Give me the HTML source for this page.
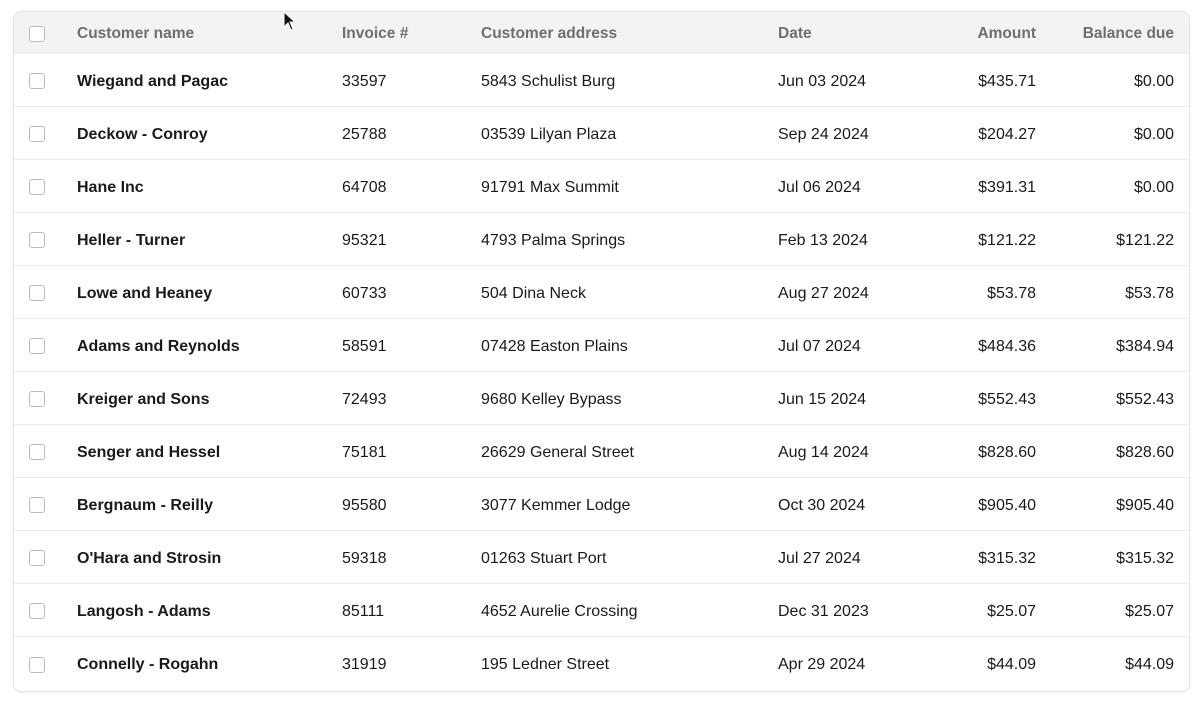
<!DOCTYPE html><html><head><style>
body{margin:0;background:#fff;font-family:"Liberation Sans",sans-serif;}
.t{position:absolute;left:13px;top:11px;width:1175px;height:679px;border:1px solid #e4e4e4;border-radius:8px;overflow:hidden;box-shadow:0 1px 2px rgba(0,0,0,.06)}
.r{position:absolute;left:0;width:1175px;height:53px;border-bottom:1px solid #ebebeb;box-sizing:border-box;font-size:16px;color:#1a1a1a}
.r:last-child{border-bottom:none}
.h{background:#f3f3f3;height:42px;color:#6e6e6e;font-weight:bold;font-size:15.5px}
.r span{position:absolute;top:calc(50% + 1.5px);transform:translateY(-50%);white-space:nowrap}
.r span.cb{top:calc(50% + 1px)}
.cb{left:15px;width:14px;height:14px;border:1px solid #b8bcc2;border-radius:3px;background:#fff}
.n{left:63px;font-weight:bold}
.i{left:328px}.a{left:467px}.d{left:764px}
.m{right:153px}.b{right:15px}
</style></head><body><div class="t">
<div class="r h" style="top:0"><span class="cb"></span><span class="n">Customer name</span><span class="i">Invoice #</span><span class="a">Customer address</span><span class="d">Date</span><span class="m">Amount</span><span class="b">Balance due</span></div>
<div class="r" style="top:42px"><span class="cb"></span><span class="n">Wiegand and Pagac</span><span class="i">33597</span><span class="a">5843 Schulist Burg</span><span class="d">Jun 03 2024</span><span class="m">$435.71</span><span class="b">$0.00</span></div>
<div class="r" style="top:95px"><span class="cb"></span><span class="n">Deckow - Conroy</span><span class="i">25788</span><span class="a">03539 Lilyan Plaza</span><span class="d">Sep 24 2024</span><span class="m">$204.27</span><span class="b">$0.00</span></div>
<div class="r" style="top:148px"><span class="cb"></span><span class="n">Hane Inc</span><span class="i">64708</span><span class="a">91791 Max Summit</span><span class="d">Jul 06 2024</span><span class="m">$391.31</span><span class="b">$0.00</span></div>
<div class="r" style="top:201px"><span class="cb"></span><span class="n">Heller - Turner</span><span class="i">95321</span><span class="a">4793 Palma Springs</span><span class="d">Feb 13 2024</span><span class="m">$121.22</span><span class="b">$121.22</span></div>
<div class="r" style="top:254px"><span class="cb"></span><span class="n">Lowe and Heaney</span><span class="i">60733</span><span class="a">504 Dina Neck</span><span class="d">Aug 27 2024</span><span class="m">$53.78</span><span class="b">$53.78</span></div>
<div class="r" style="top:307px"><span class="cb"></span><span class="n">Adams and Reynolds</span><span class="i">58591</span><span class="a">07428 Easton Plains</span><span class="d">Jul 07 2024</span><span class="m">$484.36</span><span class="b">$384.94</span></div>
<div class="r" style="top:360px"><span class="cb"></span><span class="n">Kreiger and Sons</span><span class="i">72493</span><span class="a">9680 Kelley Bypass</span><span class="d">Jun 15 2024</span><span class="m">$552.43</span><span class="b">$552.43</span></div>
<div class="r" style="top:413px"><span class="cb"></span><span class="n">Senger and Hessel</span><span class="i">75181</span><span class="a">26629 General Street</span><span class="d">Aug 14 2024</span><span class="m">$828.60</span><span class="b">$828.60</span></div>
<div class="r" style="top:466px"><span class="cb"></span><span class="n">Bergnaum - Reilly</span><span class="i">95580</span><span class="a">3077 Kemmer Lodge</span><span class="d">Oct 30 2024</span><span class="m">$905.40</span><span class="b">$905.40</span></div>
<div class="r" style="top:519px"><span class="cb"></span><span class="n">O'Hara and Strosin</span><span class="i">59318</span><span class="a">01263 Stuart Port</span><span class="d">Jul 27 2024</span><span class="m">$315.32</span><span class="b">$315.32</span></div>
<div class="r" style="top:572px"><span class="cb"></span><span class="n">Langosh - Adams</span><span class="i">85111</span><span class="a">4652 Aurelie Crossing</span><span class="d">Dec 31 2023</span><span class="m">$25.07</span><span class="b">$25.07</span></div>
<div class="r" style="top:625px;border-bottom:none"><span class="cb"></span><span class="n">Connelly - Rogahn</span><span class="i">31919</span><span class="a">195 Ledner Street</span><span class="d">Apr 29 2024</span><span class="m">$44.09</span><span class="b">$44.09</span></div>
</div>
<svg style="position:absolute;left:283px;top:11px" width="14" height="22" viewBox="0 0 14 22"><path d="M1 1 L1 16 L5 12 L8 19 L10 18 L7 11 L12 11 Z" fill="#111" stroke="#fff" stroke-width="1"/></svg>
</body></html>
